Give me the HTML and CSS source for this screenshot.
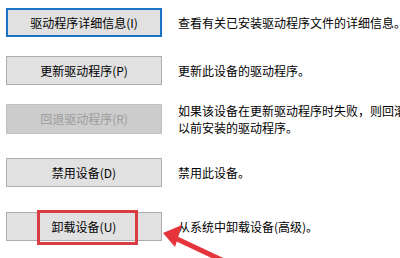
FILE: index.html
```html
<!DOCTYPE html>
<html lang="zh-CN">
<head>
<meta charset="utf-8">
<link rel="stylesheet" href="styles.css">
</head>
<body>
<div class="list">
  <div class="row">
    <div class="btn focus">驱动程序详细信息(I)</div>
    <div class="desc">查看有关已安装驱动程序文件的详细信息。</div>
  </div>
  <div class="row">
    <div class="btn">更新驱动程序(P)</div>
    <div class="desc">更新此设备的驱动程序。</div>
  </div>
  <div class="row row-tall">
    <div class="btn disabled">回退驱动程序(R)</div>
    <div class="desc">如果该设备在更新驱动程序时失败，则回滚到<br>以前安装的驱动程序。</div>
  </div>
  <div class="row row-gap-more">
    <div class="btn">禁用设备(D)</div>
    <div class="desc">禁用此设备。</div>
  </div>
  <div class="row">
    <div class="btn highlight-wrap">卸载设备(U)<span class="highlight"></span></div>
    <div class="desc">从系统中卸载设备(高级)。</div>
  </div>
</div>
<svg class="arrow" width="400" height="258" viewBox="0 0 400 258">
  <line x1="177" y1="239" x2="226" y2="262" stroke="#e5353b" stroke-width="5"/>
  <polygon points="163,233 182,225 175,247" fill="#e5353b"/>
</svg>
</body>
</html>
```
FILE: styles.css
```css
html, body {
  margin: 0;
  padding: 0;
  background: #ffffff;
}
body {
  width: 400px;
  height: 258px;
  overflow: hidden;
  position: relative;
  font-family: "Noto Sans CJK SC", "Noto Sans", sans-serif;
  font-size: 12px;
  color: #000000;
}
.list {
  padding: 8px 0 0 6px;
  display: flex;
  flex-direction: column;
  gap: 19px;
}
.row {
  display: flex;
  align-items: center;
  gap: 16px;
  height: 29px;
}
.row-tall {
  height: 30px;
  margin-bottom: 5px;
}
.row-gap-more {
  margin-bottom: 6px;
}
.btn {
  box-sizing: border-box;
  width: 156px;
  height: 29px;
  flex: none;
  display: flex;
  align-items: center;
  justify-content: center;
  background: #e1e1e1;
  border: 1px solid #adadad;
  line-height: 1;
}
.btn.focus {
  border: 2px solid #1c74c8;
}
.btn.disabled {
  height: 30px;
  background: #cccccc;
  border-color: #bfbfbf;
  color: #9c9c9c;
}
.desc {
  line-height: 17px;
  white-space: nowrap;
}
.highlight-wrap {
  position: relative;
}
.highlight {
  position: absolute;
  left: 30px;
  top: -3px;
  width: 101px;
  height: 35px;
  box-sizing: border-box;
  border: 3px solid #d93c42;
}
.arrow {
  position: absolute;
  left: 0;
  top: 0;
}
```
